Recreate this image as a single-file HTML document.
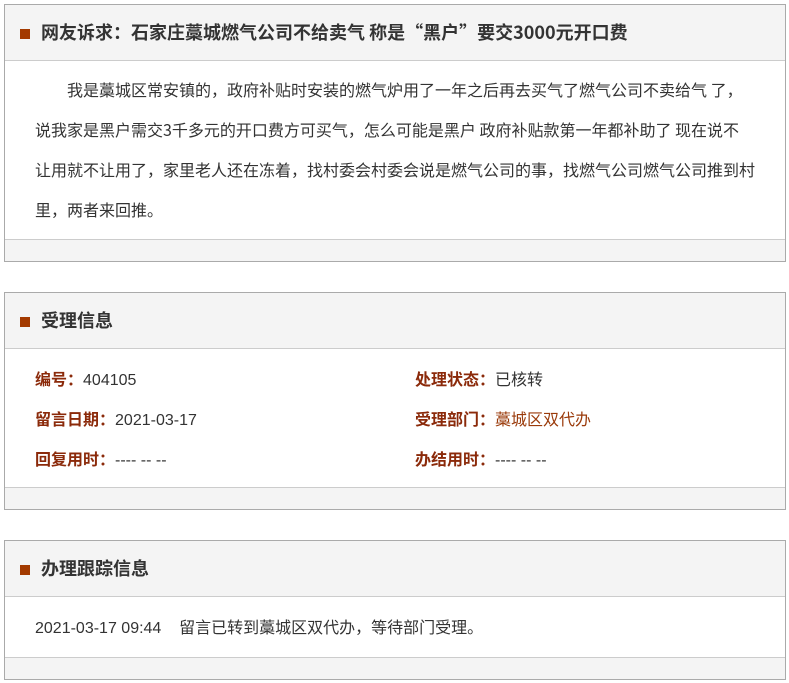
<!DOCTYPE html>
<html><head><meta charset="utf-8"><style>
*{margin:0;padding:0;box-sizing:border-box}
body{width:789px;height:683px;background:#fff;font-family:"Liberation Sans","Noto Sans CJK SC",sans-serif;color:#333;position:relative;overflow:hidden}
.box{position:absolute;left:4px;width:782px;border:1px solid #aaa;background:#fff;overflow:hidden}
.hd{height:56px;background:#f4f4f4;border-bottom:1px solid #ccc;position:relative}
.hd i{position:absolute;left:15px;top:24px;width:10px;height:10px;background:#a33a00}
.hd h2{position:absolute;left:36px;top:15px;font-size:18px;font-weight:bold;color:#333;line-height:24px;white-space:nowrap;font-family:"Noto Sans CJK SC",sans-serif}
.ft{height:22px;background:#f4f4f4;border-top:1px solid #ccc}
.p{font-size:16px;line-height:40px;padding:8px 0 0 30px;height:178px;font-family:"Noto Sans CJK SC",sans-serif;white-space:nowrap}
.r{position:absolute;font-size:16px;line-height:20px;white-space:nowrap}
.r b{color:#8b2a0a}
</style></head><body>
<div class="box" style="top:4px;height:258px">
<div class="hd"><i></i><h2>网友诉求：石家庄藁城燃气公司不给卖气 称是“黑户”要交3000元开口费</h2></div>
<div class="p"><span style="padding-left:32px"></span>我是藁城区常安镇的，政府补贴时安装的燃气炉用了一年之后再去买气了燃气公司不卖给气 了，<br>说我家是黑户需交3千多元的开口费方可买气，怎么可能是黑户 政府补贴款第一年都补助了 现在说不<br>让用就不让用了，家里老人还在冻着，找村委会村委会说是燃气公司的事，找燃气公司燃气公司推到村<br>里，两者来回推。</div>
<div class="ft"></div>
</div>
<div class="box" style="top:292px;height:218px">
<div class="hd"><i></i><h2>受理信息</h2></div>
<div style="height:138px;position:relative">
<div class="r" style="left:30px;top:22px"><b>编号：</b>404105</div>
<div class="r" style="left:30px;top:62px"><b>留言日期：</b>2021-03-17</div>
<div class="r" style="left:30px;top:102px"><b>回复用时：</b>---- -- --</div>
<div class="r" style="left:410px;top:22px"><b>处理状态：</b>已核转</div>
<div class="r" style="left:410px;top:62px"><b>受理部门：</b><span style="color:#9a3a0a">藁城区双代办</span></div>
<div class="r" style="left:410px;top:102px"><b>办结用时：</b>---- -- --</div>
</div>
<div class="ft"></div>
</div>
<div class="box" style="top:540px;height:140px">
<div class="hd"><i></i><h2>办理跟踪信息</h2></div>
<div style="height:60px;position:relative">
<div class="r" style="left:30px;top:22px">2021-03-17 09:44&nbsp;&nbsp;&nbsp; 留言已转到藁城区双代办，等待部门受理。</div>
</div>
<div class="ft"></div>
</div>
</body></html>
